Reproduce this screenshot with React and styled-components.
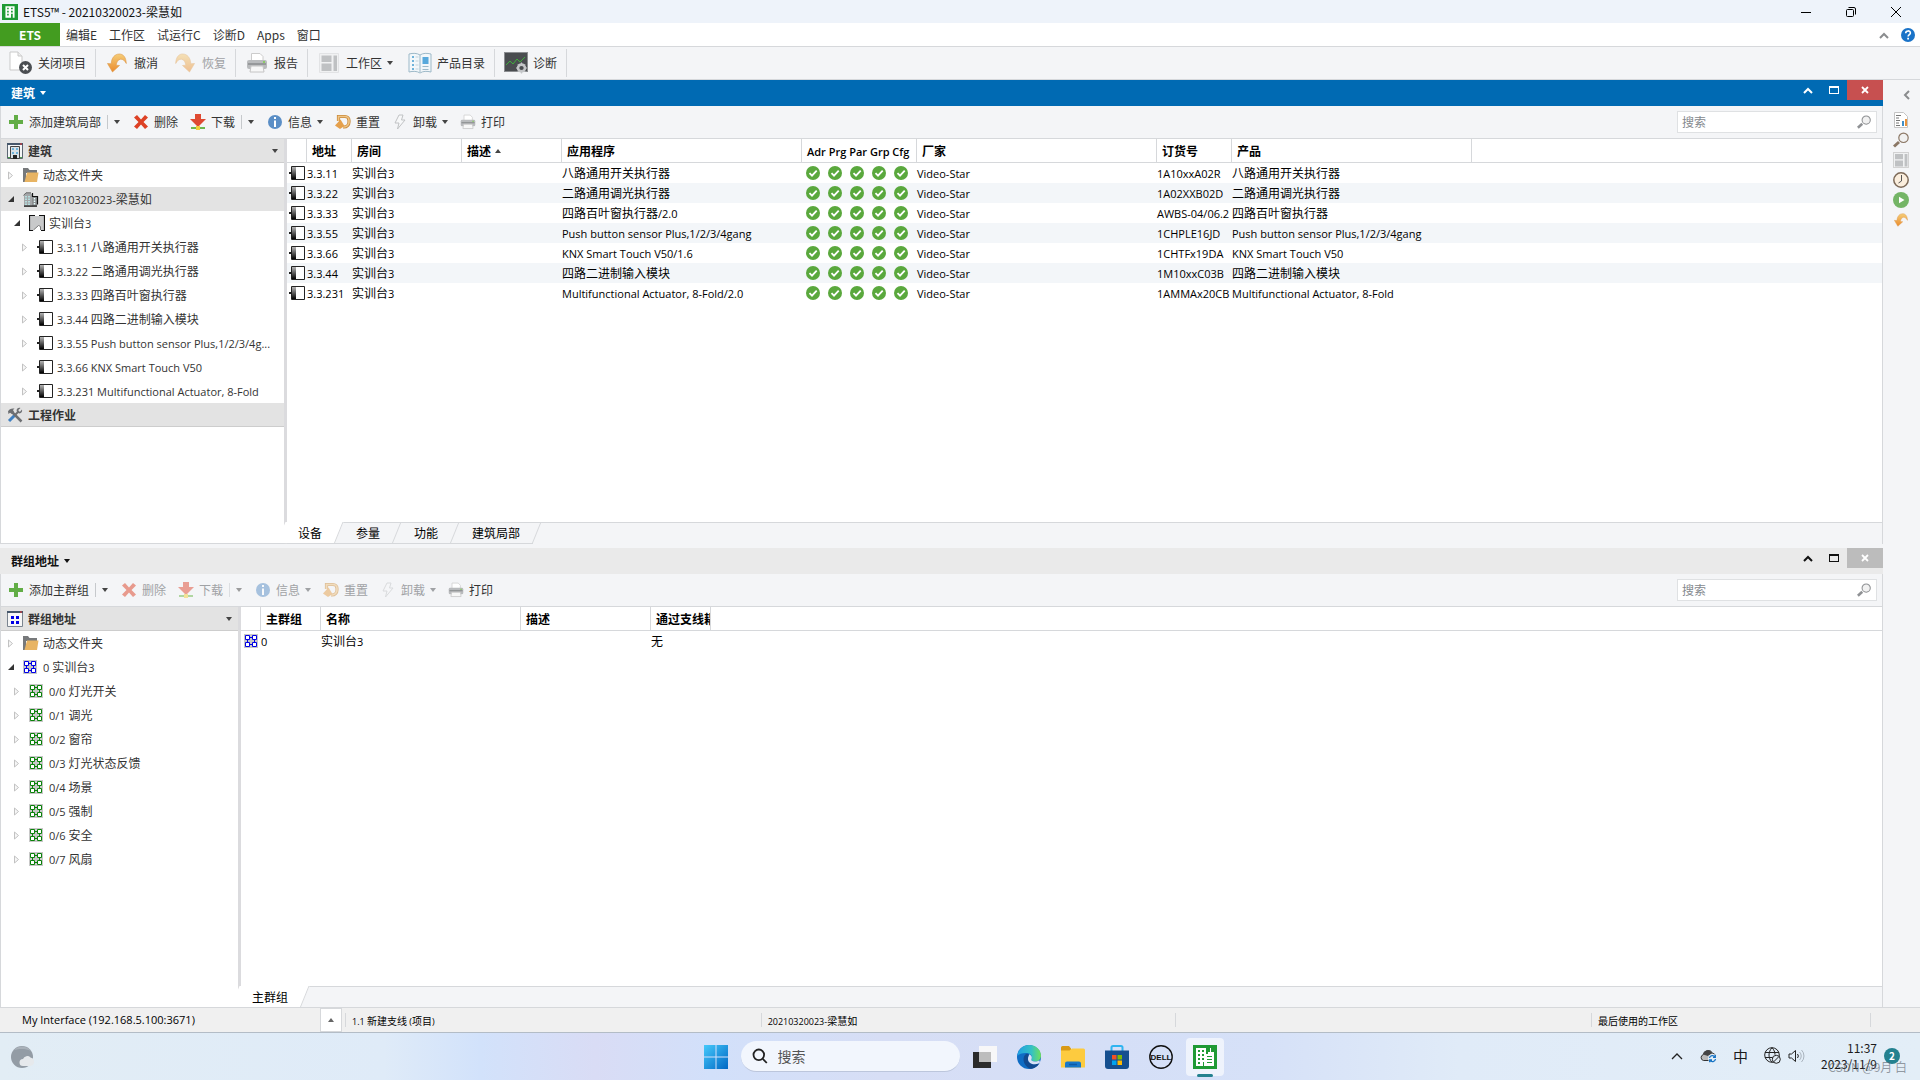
import React from 'react';
import styled, { createGlobalStyle } from 'styled-components';

const GlobalStyle = createGlobalStyle`
  * {
    box-sizing: border-box;
  }
  body {
    margin: 0;
    font-family: 'Noto Sans CJK SC', sans-serif;
    font-size: 12px;
    line-height: 16px;
    color: #333;
    background: #f4f5f7;
  }
  button,
  input {
    font: inherit;
    color: inherit;
    margin: 0;
    padding: 0;
    border: 0;
    background: none;
  }
  svg {
    display: block;
    flex: none;
  }
`;

const line = '#d6d8db';

// ---------- 整体框架 ----------
const Screen = styled.div`
  display: flex;
  flex-direction: column;
  min-height: 100vh;
`;

const TitleBar = styled.header`
  display: flex;
  align-items: center;
  height: 23px;
  padding: 0 2px;
  gap: 5px;
  background: #eef3fa;
  color: #111;
`;

const WindowTitle = styled.h1`
  flex: 1;
  margin: 0;
  font-size: 12px;
  font-weight: 400;
`;

const WindowButtons = styled.div`
  display: flex;
`;

const WindowButton = styled.button`
  display: flex;
  align-items: center;
  justify-content: center;
  width: 45px;
  height: 21px;
`;

const MenuBar = styled.nav`
  display: flex;
  align-items: center;
  height: 24px;
  gap: 12px;
  padding-right: 5px;
  background: #fff;
  border-bottom: 1px solid ${line};
`;

const EtsButton = styled.button`
  width: 60px;
  height: 23px;
  margin-right: -6px;
  background: #439c20;
  color: #fff;
  font-weight: 700;
`;

const MenuItem = styled.button`
  white-space: nowrap;
`;

const MenuSpacer = styled.div`
  flex: 1;
`;

const MainToolbar = styled.div`
  display: flex;
  align-items: center;
  height: 33px;
  background: #f4f5f7;
  border-bottom: 1px solid ${line};
`;

const ToolGroup = styled.div`
  display: flex;
  align-items: center;
  gap: 15px;
  height: 28px;
  padding: 0 9px;
  border-right: 1px solid ${line};
`;

const ToolButton = styled.button`
  display: flex;
  align-items: center;
  gap: 5px;
  white-space: nowrap;
  color: ${(p) => (p.disabled ? '#a0a2a5' : '#333')};
`;

const IconSlot = styled.span`
  display: flex;
  align-items: center;
  justify-content: center;
  width: ${(p) => p.$size || 16}px;
  height: ${(p) => p.$size || 16}px;
  opacity: ${(p) => (p.$faded ? 0.5 : 1)};
`;

const Main = styled.main`
  display: flex;
  flex: 1;
`;

const Panels = styled.div`
  display: flex;
  flex-direction: column;
  flex: 1;
  min-width: 0;
  gap: 4px;
`;

const SideRail = styled.aside`
  display: flex;
  flex-direction: column;
  align-items: center;
  gap: 4px;
  width: 37px;
  padding: 7px 2px 0 0;
`;

const RailButton = styled.button`
  display: flex;
  align-items: center;
  justify-content: center;
  width: 16px;
  height: 16px;
`;

const RailToggle = styled(RailButton)`
  align-self: flex-end;
  margin: 0 4px 5px 0;
`;

// ---------- 面板 ----------
const PanelBox = styled.section`
  display: flex;
  flex-direction: column;
  flex: ${(p) => p.$grow} 1 0;
`;

const PanelHeader = styled.div`
  display: flex;
  height: 26px;
  padding-left: 11px;
  background: ${(p) => (p.$active ? '#006ab3' : '#eaeaea')};
  color: ${(p) => (p.$active ? '#fff' : '#111')};
`;

const PanelTitle = styled.button`
  display: flex;
  align-items: center;
  gap: 5px;
  font-weight: 700;
`;

const PanelControls = styled.div`
  display: flex;
  margin-left: auto;
`;

const PanelControl = styled.button`
  display: flex;
  align-items: center;
  justify-content: center;
  width: 26px;
  height: 20px;
`;

const CloseControl = styled(PanelControl)`
  width: 36px;
  background: ${(p) => (p.$active ? '#c75050' : '#bcbcbc')};
  color: #fff;
`;

const PanelBody = styled.div`
  display: flex;
  flex-direction: column;
  flex: 1;
  border: 1px solid ${line};
  border-width: 0 1px 0 1px;
`;

const PanelToolbar = styled.div`
  display: flex;
  align-items: center;
  gap: 12px;
  height: 33px;
  padding: 0 5px 0 7px;
  border-bottom: 1px solid ${line};
`;

const SplitButton = styled.div`
  display: flex;
  align-items: center;
  gap: 6px;
  margin-right: 1px;
`;

const DropButton = styled.button`
  display: flex;
  align-items: center;
  height: 14px;
  padding-left: 6px;
  border-left: 1px solid #c6c9cc;
  opacity: ${(p) => (p.disabled ? 0.5 : 1)};
`;

const SearchBox = styled.label`
  display: flex;
  align-items: center;
  width: 200px;
  height: 22px;
  margin-left: auto;
  padding: 0 5px 0 4px;
  background: #fff;
  border: 1px solid #dfe1e3;
`;

const SearchInput = styled.input`
  flex: 1;
  min-width: 0;
  outline: 0;
  &::placeholder {
    color: #85898e;
    opacity: 1;
  }
`;

const Split = styled.div`
  display: flex;
  flex: 1;
`;

// ---------- 树 ----------
const Tree = styled.div`
  display: flex;
  flex-direction: column;
  width: ${(p) => p.$width}px;
  background: #fff;
  border-right: 3px solid #dbdbde;
  border-bottom: ${(p) => (p.$closed ? 1 : 0)}px solid ${line};
`;

const TreeHeader = styled.button`
  display: flex;
  align-items: center;
  gap: 5px;
  height: 24px;
  padding: 0 6px;
  background: #e3e3e3;
  border-bottom: 1px solid #cdcdcd;
  font-weight: 700;
`;

const TreeHeaderText = styled.span`
  flex: 1;
  text-align: left;
`;

const TreeList = styled.ul`
  margin: 0;
  padding: 0;
  list-style: none;
`;

const TreeRow = styled.li`
  display: flex;
  align-items: center;
  height: 24px;
  padding-left: ${(p) => [6, 12, 20][p.$level]}px;
  background: ${(p) => (p.$selected ? '#e3e3e3' : '#fff')};
  white-space: nowrap;
  overflow: hidden;
`;

const TreeIcon = styled.span`
  display: flex;
  width: 16px;
  margin: 0 4px 0 8px;
`;

// ---------- 表格 ----------
const Content = styled.div`
  display: flex;
  flex-direction: column;
  flex: 1;
  min-width: 0;
`;

const TableArea = styled.div`
  flex: 1;
  background: #fff;
  border-bottom: 1px solid ${line};
`;

const Table = styled.table`
  width: 100%;
  table-layout: fixed;
  border-collapse: separate;
  border-spacing: 0;
  color: #000;
`;

const Th = styled.th`
  height: 24px;
  padding: 0 0 0 5px;
  border-bottom: 1px solid ${line};
  border-right: ${(p) => (p.$open ? 0 : 1)}px solid ${line};
  font-weight: ${(p) => (p.$light ? 600 : 700)};
  text-align: left;
  white-space: nowrap;
  overflow: hidden;
`;

const ThInner = styled.span`
  display: flex;
  align-items: center;
  gap: 4px;
`;

const Tr = styled.tr`
  background: ${(p) => (p.$striped ? '#f3f6f9' : '#fff')};
`;

const Td = styled.td`
  height: 20px;
  padding: 0;
  white-space: nowrap;
`;

const IconTd = styled(Td)`
  padding-left: ${(p) => p.$indent}px;
`;

const Checks = styled.div`
  display: flex;
  gap: 8px;
  padding-left: 4px;
`;

const Tabs = styled.div`
  display: flex;
  height: ${(p) => (p.$closed ? 21 : 20)}px;
`;

const Tab = styled.button`
  position: relative;
  height: 100%;
  padding: 0 13px 0 21px;
  border-bottom: ${(p) => (p.$closed ? 1 : 0)}px solid ${line};
  color: #000;
  &::after {
    content: '';
    position: absolute;
    top: 0;
    right: 0;
    bottom: 0;
    width: 1px;
    background: ${line};
    transform: skewX(-22deg);
    transform-origin: bottom;
  }
`;

const ActiveTab = styled(Tab)`
  padding-left: 11px;
  z-index: 1;
  &::after {
    top: -1px;
    left: 0;
    width: auto;
    z-index: -1;
    background: #fff;
    border-right: 1px solid ${line};
    box-shadow: -10px 0 0 #fff;
  }
`;

// ---------- 状态栏 / 任务栏 ----------
const StatusBar = styled.footer`
  display: flex;
  align-items: center;
  height: 26px;
  background: #f0f0f0;
  border-top: 1px solid ${line};
  border-bottom: 1px solid #b3bcc6;
  color: #000;
  font-size: 10px;
`;

const Connection = styled.span`
  width: 320px;
  padding-left: 22px;
`;

const ConnectionButton = styled.button`
  display: flex;
  align-items: center;
  justify-content: center;
  width: 22px;
  height: 24px;
  margin-right: 3px;
  background: #fff;
  border: 1px solid ${line};
`;

const StatusCell = styled.span`
  flex: ${(p) => p.$grow} 1 0;
  height: 14px;
  padding-left: 6px;
  border-left: 1px solid ${line};
  line-height: 16px;
  white-space: nowrap;
`;

const StatusEnd = styled(StatusCell)`
  flex: 0 0 50px;
`;

const Taskbar = styled.footer`
  position: relative;
  display: grid;
  grid-template-columns: 1fr auto 1fr;
  align-items: center;
  height: 47px;
  background: linear-gradient(
    90deg,
    #e2edf5 0%,
    #dfebf8 20%,
    #d2e2fb 25%,
    #d9dcf5 31%,
    #d2e0fa 37%,
    #d7def5 46%,
    #d5dff7 58%,
    #d6e1f8 66%,
    #e0ebf8 76%,
    #e3eef7 100%
  );
`;

const Weather = styled.button`
  justify-self: start;
  margin-left: 10px;
`;

const Dock = styled.div`
  display: flex;
  align-items: center;
  gap: 6px;
`;

const DockButton = styled.button`
  display: flex;
  flex-direction: column;
  align-items: center;
  justify-content: center;
  width: 38px;
  height: 38px;
  border-radius: 4px;
  background: ${(p) => (p.$open ? 'rgba(255, 255, 255, 0.6)' : 'transparent')};
`;

const OpenMark = styled.span`
  width: 16px;
  height: 3px;
  margin: 5px 0 -8px;
  border-radius: 2px;
  background: #23818f;
`;

const TaskSearch = styled.label`
  display: flex;
  align-items: center;
  gap: 10px;
  width: 219px;
  height: 31px;
  padding-left: 11px;
  border-radius: 16px;
  background: #f2f6fd;
  border-bottom: 1px solid #bcc6dc;
  font-size: 14px;
  input::placeholder {
    color: #555;
    opacity: 1;
  }
`;

const Tray = styled.div`
  display: flex;
  align-items: center;
  justify-self: end;
  gap: 15px;
  padding: 0 20px 2px 0;
  color: #1b1b1b;
`;

const TrayButton = styled.button`
  display: flex;
  align-items: center;
  justify-content: center;
  width: 17px;
  font-size: 15px;
`;

const VolumeButton = styled(TrayButton)`
  margin-left: -8px;
`;

const Clock = styled.div`
  width: 57px;
  text-align: right;
  white-space: nowrap;
`;

const Badge = styled.span`
  width: 16px;
  height: 16px;
  margin-left: -8px;
  border-radius: 50%;
  background: #23818f;
  color: #fff;
  font-size: 10px;
  font-weight: 700;
  text-align: center;
`;

const Watermark = styled.span`
  position: absolute;
  right: 13px;
  bottom: 5px;
  color: rgba(90, 95, 105, 0.6);
`;

// ---------- 文字 ----------
const Latin = styled.span`
  font-family: 'Open Sans', sans-serif;
  font-size: ${(p) => p.$size}px;
  line-height: 1;
`;

// 西文比中文小一号，两种字形高度才一致
const Label = ({ children, size = 11 }) => (
  <span>
    {children
      .split(/([\x20-\x7e]+)/)
      .filter(Boolean)
      .map((part, i) =>
        /^[\x20-\x7e]/.test(part) ? (
          <Latin key={i} $size={size}>
            {part}
          </Latin>
        ) : (
          part
        )
      )}
  </span>
);

// ---------- 图标 ----------
const Arrow = ({ up, color = '#444' }) => (
  <svg width="6" height="4" viewBox="0 0 6 4">
    <path d={up ? 'M0 4 3 0 6 4z' : 'M0 0h6L3 4z'} fill={color} />
  </svg>
);

const Chevron = ({ color = 'currentColor' }) => (
  <svg width="10" height="8" viewBox="0 0 10 8" fill="none" stroke={color} strokeWidth="2">
    <path d="M1 7 5 3l4 4" />
  </svg>
);

const Expander = ({ open }) => (
  <svg width="8" height="9" viewBox="0 0 8 9">
    {open ? (
      <path d="M7 1v6H1z" fill="#333" />
    ) : (
      <path d="M1.5 1v7l4-3.5z" fill="#f6f6f6" stroke="#c2c2c2" />
    )}
  </svg>
);

const EtsLogo = () => (
  <svg width="16" height="16" viewBox="0 0 14 14">
    <path fill="#1f9a35" d="M0 0h14v14H0z" />
    <path
      fill="#fff"
      fillRule="evenodd"
      d="M3 2h8v10H3zM4.5 3.3v1.4h1.4V3.3zm3.4 0v1.4h1.5V3.3zM4.5 6v1.4h1.4V6zm3.4 0v1.4h1.5V6zM4.5 8.6V10h1.4V8.6zm3.4 0V12h1.5V8.6z"
    />
  </svg>
);

const EtsAppIcon = () => (
  <svg width="24" height="24" viewBox="0 0 24 24">
    <path fill="#1f9a35" d="M0 0h24v24H0z" />
    <path
      fill="#fff"
      fillRule="evenodd"
      d="M3 3h10v6h2V7h2V3h1v4h3v14H3zM5 5v2h2V5zm4 0v2h2V5zM5 9v2h2V9zm4 0v2h2V9zM5 13v2h2v-2zm4 0v2h2v-2zM5 17v2h2v-2zm5 0v4h1v-4zM14 11v1h5v-1zm0 3v1h5v-1zm0 3v1h5v-1z"
    />
  </svg>
);

const UndoIcon = ({ flip, size = 20 }) => (
  <svg width={size} height={size} viewBox="0 0 20 20">
    <defs>
      <linearGradient id="undoFill" x1="0" y1="0" x2="0" y2="1">
        <stop offset="0" stopColor="#f5cd78" />
        <stop offset="1" stopColor="#ea8a2c" />
      </linearGradient>
    </defs>
    <path
      transform={flip ? 'translate(20 0) scale(-1 1)' : undefined}
      fill="url(#undoFill)"
      stroke="#dd9848"
      strokeWidth=".6"
      d="M.5 10.500 5.500 19l7-6.500-3.300-.3c.3-3 1.800-5.700 4.300-6 2.500-.2 4 1.300 5.800 4.300C19 4.500 16.500 1 12.500 1 7.500 1 4.500 5 4.200 10.800z"
    />
  </svg>
);

const CloseProjectIcon = () => (
  <svg width="24" height="24" viewBox="0 0 24 24">
    <path d="M1 1h8l4 4v14H1z" fill="#fff" stroke="#c9c9c9" />
    <path d="M9 1v4h4" fill="#eee" stroke="#c9c9c9" />
    <circle cx="16.500" cy="16.500" r="6.500" fill="#4b4e52" />
    <path d="m14 14 5 5m0-5-5 5" stroke="#fff" strokeWidth="2" />
  </svg>
);

const PrinterIcon = ({ size = 22 }) => (
  <svg width={size} height={size} viewBox="0 0 22 22">
    <path d="M5.500 1.500H14l3 3V9H5.500z" fill="#fff" stroke="#ccc" />
    <rect x="1" y="8" width="20" height="9" rx="2" fill="#b9bbbd" />
    <path d="M2 12h18" stroke="#8b8d8f" strokeWidth="1.500" />
    <path d="M17 10h2" stroke="#7ccf4b" strokeWidth="1.500" />
    <path d="M5 14h12l1 6H4z" fill="#f7f7f7" stroke="#c4c4c4" />
  </svg>
);

const WorkspaceIcon = ({ size = 20, boxed }) => (
  <svg width={size} height={size} viewBox="0 0 20 20">
    <path d="M.5.5h19v19H.5z" fill="#f0f1f2" stroke={boxed ? '#c4c4c4' : '#e2e3e5'} />
    <path d="M2.500 2.500h10V9h-10zM2.500 10.500h10V18h-10zM14.500 2.500H18V18h-3.500z" fill="#bfc1c3" />
  </svg>
);

const CatalogIcon = () => (
  <svg width="24" height="22" viewBox="0 0 24 22">
    <path d="M1 2c4-1 8-1 11 1 3-2 7-2 11-1v18c-4-1-8-1-11 1-3-2-7-2-11-1z" fill="#f2f7fa" stroke="#9db9c8" />
    <path d="M12 3v17" stroke="#9db9c8" />
    <path d="M4 5h2M4 9h2M4 13h2M4 17h2" stroke="#6fb3da" strokeWidth="2" />
    <path d="M7.500 5h3m-3 4h3m-3 4h3m-3 4h3" stroke="#c3d3dc" />
    <path d="M14.500 5h6v7h-6z" fill="#58a9dc" />
    <path d="M14.500 14.500h6m-6 3h6" stroke="#9db9c8" />
  </svg>
);

const DiagnosisIcon = () => (
  <svg width="24" height="22" viewBox="0 0 24 22">
    <rect x=".5" y=".5" width="23" height="19" fill="#4a4d50" stroke="#8b8d90" />
    <path d="m2 13 4-4 3 3 4-5 3 3 5-5" fill="none" stroke="#3fae3c" />
    <circle cx="17.500" cy="16" r="3.500" fill="none" stroke="#c4c6c8" strokeWidth="2.500" />
    <path d="M17.500 10.500v11M12 16h11M13.800 12.300l7.400 7.400m0-7.400-7.400 7.400" stroke="#c4c6c8" strokeWidth="1.200" />
    <circle cx="17.500" cy="16" r="2" fill="#4a4d50" />
  </svg>
);

const PlusIcon = () => (
  <svg width="14" height="14" viewBox="0 0 14 14">
    <path d="M5 0h4v5h5v4H9v5H5V9H0V5h5z" fill="#62ad46" />
  </svg>
);

const DeleteIcon = () => (
  <svg width="14" height="14" viewBox="0 0 14 14">
    <path d="M3 0 7 4.500 11 0l3 2.500L9.500 7l4.500 4.500L11 14 7 9.500 3 14 0 11.500 4.500 7 0 2.500z" fill="#dd4125" />
  </svg>
);

const DownloadIcon = () => (
  <svg width="16" height="16" viewBox="0 0 16 16">
    <path d="M5 0h6v5h5l-8 8-8-8h5z" fill="#df4a32" />
    <path d="M1 13h14v2H1z" fill="#6eb84e" />
    <path d="M6 12h4v4H6z" fill="#f1cf3b" />
  </svg>
);

const InfoIcon = () => (
  <svg width="14" height="14" viewBox="0 0 14 14">
    <circle cx="7" cy="7" r="7" fill="#5a8ec6" />
    <path d="M6 2h2v2H6zM6 5.500h2V12H6z" fill="#fff" />
  </svg>
);

const ResetIcon = () => (
  <svg width="16" height="16" viewBox="0 0 16 16">
    <path d="M3.500 7V2.500h6.500a4 4 0 0 1 4 4V8a5 5 0 0 1-5 5H8" fill="none" stroke="#c98a3d" strokeWidth="3.200" />
    <path d="M3.500 7V2.500h6.500a4 4 0 0 1 4 4V8a5 5 0 0 1-5 5H8" fill="none" stroke="#f0c585" strokeWidth="1.600" />
    <path d="M0 11.500 5.500 5.500l4 6.500-4.500 3z" fill="#e5a04c" />
  </svg>
);

const BoltIcon = () => (
  <svg width="12" height="16" viewBox="0 0 12 16">
    <path d="M5 1h4L7.500 6h3.500L3.500 15 5 9H1z" fill="#f7f8f9" stroke="#c0c2c4" />
  </svg>
);

const MagnifierIcon = ({ size = 14, handle = '#8f9194' }) => (
  <svg width={size} height={size} viewBox="0 0 16 16">
    <path d="m1 14.500 5-4.500" stroke={handle} strokeWidth="3" />
    <circle cx="10.500" cy="5.800" r="4.700" fill="#f1f1f1" stroke={handle} strokeWidth="1.200" />
  </svg>
);

const BuildingWindowIcon = () => (
  <svg width="16" height="16" viewBox="0 0 16 16">
    <path d="M.5.5h15v15H.5z" fill="#f4f6f7" stroke="#5b6672" />
    <path d="M0 0h16v2H0z" fill="#46576b" />
    <path d="M13 1h2" stroke="#e33" />
    <path d="M3.500 3.500h9v12h-9z" fill="#d9e1e6" stroke="#444" />
    <path d="M5 5h2v2H5zm4 0h2v2H9zM5 9h2v2H5zm4 0h2v2H9z" fill="#6fb3da" />
    <path d="M6 12h4v4H6z" fill="#222" />
    <path d="M1 14h2v1H1zm12 0h2v1h-2z" fill="#4da14a" />
  </svg>
);

const GroupWindowIcon = () => (
  <svg width="16" height="16" viewBox="0 0 16 16">
    <path d="M.5.5h15v15H.5z" fill="#f7f7f7" stroke="#7b8590" />
    <path d="M0 0h16v2H0z" fill="#46576b" />
    <path d="M13 1h2" stroke="#e33" />
    <path d="M4 5h3v3H4zm5 0h3v3H9zm-5 5h3v3H4zm5 0h3v3H9z" fill="#0000e6" />
  </svg>
);

const ToolsIcon = () => (
  <svg width="16" height="16" viewBox="0 0 16 16">
    <path d="m2 14 6-6" stroke="#3f7fc0" strokeWidth="3" />
    <path d="m8 8 4-4" stroke="#6d6f72" strokeWidth="2" />
    <path d="M15 2.500 12.800 5l-1.500-.2-.2-1.600L13.500 1C11 .3 9.200 2 9.700 4.300l1.900 2c2.300.6 4.100-1.200 3.400-3.800z" fill="#6d6f72" />
    <path d="m5 5 9.500 9.500" stroke="#6d6f72" strokeWidth="2.500" />
    <path d="M1 4.500C2 2 4.500 1 7.500 1.500L6 3l1 2-2 2-2-1.300L1.500 7z" fill="#6d6f72" />
  </svg>
);

const FolderIcon = () => (
  <svg width="16" height="14" viewBox="0 0 16 14">
    <path d="M0 0h5l1.500 2H14v3H3v9H0z" fill="#77797b" />
    <path d="M4 4.500h11.500L14 14H1.500z" fill="#e8b463" />
  </svg>
);

const ProjectIcon = () => (
  <svg width="16" height="15" viewBox="0 0 16 15">
    <path d="M1 3h1V1h6v1h1v12H1z" fill="#a4a6a8" />
    <path d="M9 5h5v9H9z" fill="#8d8f91" />
    <path d="M9.500 1v4M9 4.500h5.500v8M1 14.200h13" stroke="#111" fill="none" strokeWidth="1.200" />
    <path d="M.5 3.500 3 .8h5" stroke="#666" fill="none" />
    <path d="M3 4v9M6 4v9" stroke="#b9f0f0" strokeWidth="1.500" strokeDasharray="1.500 1" />
    <path d="M11.500 6v7" stroke="#e8ffff" strokeWidth="1.500" strokeDasharray="1.500 1" />
  </svg>
);

const RoomIcon = () => (
  <svg width="16" height="16" viewBox="0 0 16 16">
    <path d="M1 1h14v14h-3v-3.500L9.500 10.500 4.500 15H1z" fill="#c8c9ca" />
    <path d="M6 .5H.5v15H4M10 .5h5.500v15H12" fill="none" stroke="#111" strokeWidth="1.200" />
    <path d="m4.500 15 5-4.500 2 1v3.500" fill="none" stroke="#777" />
  </svg>
);

const DeviceIcon = () => (
  <svg width="16" height="14" viewBox="0 0 16 14">
    <defs>
      <linearGradient id="deviceFill" x1="0" y1="0" x2="0" y2="1">
        <stop offset="0" stopColor="#b5b5b5" />
        <stop offset="1" stopColor="#000" />
      </linearGradient>
    </defs>
    <path d="M0 6h2v2H0z" fill="#222" />
    <path d="M2.500.5h13v13h-13z" fill="#fff" stroke="#222" />
    <path d="M3 1h4v12H3z" fill="url(#deviceFill)" />
  </svg>
);

const GroupIcon = ({ color }) => (
  <svg width="14" height="14" viewBox="0 0 14 14">
    <path d="M0 0h14v14H0z" fill="#c8c8c8" />
    <path d="M3.500 5.500v3m7-3v3M5.500 3.500h3m-3 7h3" stroke={color} />
    <path d="M1.500 1.500h4v4h-4zM8.500 1.500h4v4h-4zM1.500 8.500h4v4h-4zM8.500 8.500h4v4h-4z" fill="#fff" stroke={color} />
  </svg>
);

const CheckIcon = () => (
  <svg width="14" height="14" viewBox="0 0 14 14">
    <circle cx="7" cy="7" r="7" fill="#5aa83d" />
    <path d="m3.500 7.200 2.500 2.500 4.700-5" fill="none" stroke="#fff" strokeWidth="1.800" />
  </svg>
);

const ReportIcon = () => (
  <svg width="16" height="16" viewBox="0 0 16 16">
    <path d="M1.500.5h9l4 4v11h-13z" fill="#fff" stroke="#c4c4c4" />
    <path d="M3 3.500h5M3 6h3M3 8.500h4M3 11h3M3 13.500h4" stroke="#777" />
    <path d="M9 9h2v5H9z" fill="#3f8fc8" />
    <path d="M12 7h2v7h-2z" fill="#e8923a" />
  </svg>
);

const ClockIcon = () => (
  <svg width="16" height="16" viewBox="0 0 16 16">
    <circle cx="8" cy="8" r="7.200" fill="#fbeedd" stroke="#7d6a58" strokeWidth="1.500" />
    <path d="M8.500 3v6L5.500 11" fill="none" stroke="#555" />
  </svg>
);

const PlayIcon = () => (
  <svg width="16" height="16" viewBox="0 0 16 16">
    <circle cx="8" cy="8" r="8" fill="#74b566" />
    <path d="M6 4.800 11.500 8 6 11.200z" fill="#fff" />
  </svg>
);

const HelpIcon = () => (
  <svg width="14" height="14" viewBox="0 0 14 14">
    <circle cx="7" cy="7" r="7" fill="#1a73c8" />
    <path d="M4.700 5.200c0-3 4.700-3 4.700-.2 0 1.700-2.200 1.700-2.300 3.500" fill="none" stroke="#fff" strokeWidth="1.600" />
    <path d="M6.200 9.800h1.800v1.700H6.200z" fill="#fff" />
  </svg>
);

const WindowsIcon = () => (
  <svg width="24" height="24" viewBox="0 0 24 24">
    <defs>
      <linearGradient id="winFill" x1="0" y1="0" x2="1" y2="1">
        <stop offset="0" stopColor="#45c9fb" />
        <stop offset="1" stopColor="#0067c4" />
      </linearGradient>
    </defs>
    <path d="M0 0h11.500v11.500H0zM12.500 0H24v11.500H12.500zM0 12.500h11.500V24H0zM12.500 12.500H24V24H12.500z" fill="url(#winFill)" />
  </svg>
);

const TaskViewIcon = () => (
  <svg width="24" height="24" viewBox="0 0 24 24">
    <path d="M0 7h18v16H0z" fill="#2b2b2b" />
    <path d="M6 1h18v16H6z" fill="#f7f7f8" />
    <path d="M6 7h12v10H6z" fill="#bdbdbd" />
  </svg>
);

const EdgeIcon = () => (
  <svg width="24" height="24" viewBox="0 0 24 24">
    <defs>
      <linearGradient id="edgeTop" x1="0" y1="0" x2="1" y2="0">
        <stop offset="0" stopColor="#1f9fe3" />
        <stop offset=".6" stopColor="#35c1c4" />
        <stop offset="1" stopColor="#6fe05a" />
      </linearGradient>
    </defs>
    <circle cx="12" cy="12" r="12" fill="#0f6cc4" />
    <path d="M.3 11C1 4.500 6 0 12 0c7 0 12 5 12 10.500 0 4-3 6-6 6-2.800 0-4-1.200-3.500-2.300C16 11.500 14 8.500 10 8c-4-.4-8 1-9.700 3z" fill="url(#edgeTop)" />
    <path d="M9 9c-4 3-3.500 11 4 14.800 4 .2 8-2.300 9.500-6-5 3-11 1.200-11.500-3.300C10.800 12 12 11 12 10c0-.8-1.500-1.600-3-1z" fill="#124a8f" />
    <path d="M14.500 14.200C15.600 12 14 9.500 12 9.500c.3 1-1.300 2.400-1 5 .4 3 3.500 5 7 4.800 2.300-.1 3.800-.8 5-1.800l-.6-2.200c-1.200.8-2.800 1.200-4.600 1.200-2.800 0-3.900-1.300-3.300-2.300z" fill="#d8e2f6" />
  </svg>
);

const ExplorerIcon = () => (
  <svg width="24" height="24" viewBox="0 0 24 24">
    <path d="M0 2.500A1.500 1.500 0 0 1 1.500 1H8l2 2.500V6H0z" fill="#d99a16" />
    <path d="M0 5.500h8.500L11 3.500h11.500A1.500 1.500 0 0 1 24 5v17.500H0z" fill="#fdcb3f" />
    <path d="M4 22.500v-4a2 2 0 0 1 2-2h12a2 2 0 0 1 2 2v4z" fill="#1878c9" />
    <path d="M8 19.500h8" stroke="#0f5aa5" strokeWidth="1.500" />
  </svg>
);

const StoreIcon = () => (
  <svg width="24" height="24" viewBox="0 0 24 24">
    <path d="M6.500 7V2.500a1.500 1.500 0 0 1 1.500-1.500h8a1.500 1.500 0 0 1 1.500 1.500V7" fill="none" stroke="#2fb4f0" strokeWidth="2" />
    <path d="M0 5.500h24V21a3 3 0 0 1-3 3H3a3 3 0 0 1-3-3z" fill="#154f8f" />
    <path d="M7 10h4.500v4.500H7z" fill="#f25022" />
    <path d="M12.500 10H17v4.500h-4.500z" fill="#7fba00" />
    <path d="M7 15.500h4.500V20H7z" fill="#00a4ef" />
    <path d="M12.500 15.500H17V20h-4.500z" fill="#ffb900" />
  </svg>
);

const DellIcon = () => (
  <svg width="24" height="24" viewBox="0 0 24 24">
    <circle cx="12" cy="12" r="11.200" fill="none" stroke="#111" strokeWidth="1.400" />
    <text x="12" y="15" textAnchor="middle" fontFamily="Liberation Sans" fontWeight="700" fontSize="8" fill="#111">
      DELL
    </text>
  </svg>
);

const SearchGlass = () => (
  <svg width="16" height="16" viewBox="0 0 16 16" fill="none" stroke="#222" strokeWidth="1.800">
    <circle cx="6.800" cy="6.800" r="5.300" />
    <path d="m10.800 10.800 4 4.200" />
  </svg>
);

const WeatherIcon = () => (
  <svg width="24" height="24" viewBox="0 0 24 24">
    <circle cx="12" cy="12" r="11" fill="#939ca5" />
    <path d="M4 5a11 11 0 0 1 17 1c-6-3-12-2-17-1z" fill="#a9b1b9" />
    <path d="M13 21a3.500 3.500 0 0 1 0-7 4.500 4.500 0 0 1 7.500-1.500 4.300 4.300 0 0 1 0 8.500z" fill="#e6e9ec" />
  </svg>
);

const CloudSyncIcon = () => (
  <svg width="17" height="14" viewBox="0 0 17 14">
    <path d="M3.500 11.500a3 3 0 0 1-.3-5.800A5 5 0 0 1 12.500 4 4 4 0 0 1 15.500 8v3.500z" fill="#b9b9b9" stroke="#333" />
    <path d="M3.200 5.500A5 5 0 0 1 12.500 4L8 7z" fill="#444" />
    <circle cx="12.500" cy="9.500" r="4.500" fill="#e2edf7" />
    <path d="M9.500 9a3 3 0 0 1 5.500-1M15.500 10a3 3 0 0 1-5.500 1.200M15.300 6v2.300H13M9.700 13.200V11H12" fill="none" stroke="#1673c4" strokeWidth="1.300" />
  </svg>
);

const OfflineIcon = () => (
  <svg width="17" height="17" viewBox="0 0 17 17" fill="none" stroke="#222">
    <circle cx="8" cy="8" r="7.300" />
    <path d="M1 5.500h14M1 10.500h8M8 .7C4 5 4 11 8 15.300M8 .7c2 2 3 4.500 3 7" />
    <circle cx="12.300" cy="12.300" r="4" fill="#e2edf7" />
    <path d="m9.500 15 5.600-5.600" />
  </svg>
);

const SpeakerIcon = () => (
  <svg width="17" height="14" viewBox="0 0 17 14" fill="none" stroke="#222">
    <path d="M1 5h2.500L7.500 1.500v11L3.500 9H1z" />
    <path d="M9.500 5a3 3 0 0 1 0 4" />
    <path d="M11.500 3a5.500 5.500 0 0 1 0 8M13.500 1a8.500 8.500 0 0 1 0 12" stroke="#a9b3bd" />
  </svg>
);

// ---------- 数据 ----------
const devices = [
  ['3.3.11', '八路通用开关执行器', '1A10xxA02R', '八路通用开关执行器'],
  ['3.3.22', '二路通用调光执行器', '1A02XXB02D', '二路通用调光执行器'],
  ['3.3.33', '四路百叶窗执行器/2.0', 'AWBS-04/06.2', '四路百叶窗执行器'],
  ['3.3.55', 'Push button sensor Plus,1/2/3/4gang', '1CHPLE16JD', 'Push button sensor Plus,1/2/3/4gang'],
  ['3.3.66', 'KNX Smart Touch V50/1.6', '1CHTFx19DA', 'KNX Smart Touch V50'],
  ['3.3.44', '四路二进制输入模块', '1M10xxC03B', '四路二进制输入模块'],
  ['3.3.231', 'Multifunctional Actuator, 8-Fold/2.0', '1AMMAx20CB', 'Multifunctional Actuator, 8-Fold'],
];

const buildingTree = [
  { level: 0, icon: <FolderIcon />, text: '动态文件夹' },
  { level: 0, icon: <ProjectIcon />, text: '20210320023-梁慧如', open: true, selected: true },
  { level: 1, icon: <RoomIcon />, text: '实训台3', open: true },
  ...[
    '3.3.11 八路通用开关执行器',
    '3.3.22 二路通用调光执行器',
    '3.3.33 四路百叶窗执行器',
    '3.3.44 四路二进制输入模块',
    '3.3.55 Push button sensor Plus,1/2/3/4g...',
    '3.3.66 KNX Smart Touch V50',
    '3.3.231 Multifunctional Actuator, 8-Fold',
  ].map((text) => ({ level: 2, icon: <DeviceIcon />, text })),
];

const groupTree = [
  { level: 0, icon: <FolderIcon />, text: '动态文件夹' },
  { level: 0, icon: <GroupIcon color="#0000e6" />, text: '0 实训台3', open: true },
  ...['灯光开关', '调光', '窗帘', '灯光状态反馈', '场景', '强制', '安全', '风扇'].map((name, i) => ({
    level: 1,
    icon: <GroupIcon color="#0a820a" />,
    text: `0/${i} ${name}`,
  })),
];

// ---------- 组件 ----------
const Action = ({ icon, text, disabled, drop }) => (
  <ToolButton disabled={disabled}>
    <IconSlot $faded={disabled}>{icon}</IconSlot>
    {text}
    {drop && <Arrow color={disabled ? '#a0a2a5' : '#444'} />}
  </ToolButton>
);

const SplitAction = ({ disabled, ...rest }) => (
  <SplitButton>
    <Action disabled={disabled} {...rest} />
    <DropButton disabled={disabled} aria-label="更多">
      <Arrow />
    </DropButton>
  </SplitButton>
);

const TreeItems = ({ items }) => (
  <TreeList>
    {items.map((item) => (
      <TreeRow key={item.text} $level={item.level} $selected={item.selected}>
        <Expander open={item.open} />
        <TreeIcon>{item.icon}</TreeIcon>
        <Label>{item.text}</Label>
      </TreeRow>
    ))}
  </TreeList>
);

const Panel = ({ title, active, grow, addText, disabled, children }) => (
  <PanelBox $grow={grow}>
    <PanelHeader $active={active}>
      <PanelTitle>
        {title}
        <Arrow color="currentColor" />
      </PanelTitle>
      <PanelControls>
        <PanelControl aria-label="折叠">
          <Chevron />
        </PanelControl>
        <PanelControl aria-label="最大化">
          <svg width="10" height="8" viewBox="0 0 10 8">
            <path d="M0 0h10v8H0zM1 2v5h8V2z" fill="currentColor" fillRule="evenodd" />
          </svg>
        </PanelControl>
        <CloseControl $active={active} aria-label="关闭">
          <svg width="8" height="8" viewBox="0 0 8 8">
            <path d="m1 1 6 6m0-6L1 7" stroke="currentColor" strokeWidth="1.800" />
          </svg>
        </CloseControl>
      </PanelControls>
    </PanelHeader>
    <PanelBody>
      <PanelToolbar>
        <SplitAction icon={<PlusIcon />} text={addText} />
        <Action icon={<DeleteIcon />} text="删除" disabled={disabled} />
        <SplitAction icon={<DownloadIcon />} text="下载" disabled={disabled} />
        <Action icon={<InfoIcon />} text="信息" disabled={disabled} drop />
        <Action icon={<ResetIcon />} text="重置" disabled={disabled} />
        <Action icon={<BoltIcon />} text="卸载" disabled={disabled} drop />
        <Action icon={<PrinterIcon size={16} />} text="打印" />
        <SearchBox>
          <SearchInput type="text" placeholder="搜索" aria-label={`搜索${title}`} />
          <MagnifierIcon />
        </SearchBox>
      </PanelToolbar>
      <Split>{children}</Split>
    </PanelBody>
  </PanelBox>
);

const DeviceTable = () => (
  <Table>
    <colgroup>
      {[20, 45, 110, 100, 240, 115, 240, 75, 240].map((w, i) => (
        <col key={i} width={w} />
      ))}
      <col />
    </colgroup>
    <thead>
      <tr>
        <Th />
        <Th>地址</Th>
        <Th>房间</Th>
        <Th>
          <ThInner>
            描述
            <Arrow up />
          </ThInner>
        </Th>
        <Th>应用程序</Th>
        <Th $light>
          <Label>Adr Prg Par Grp Cfg</Label>
        </Th>
        <Th>厂家</Th>
        <Th>订货号</Th>
        <Th>产品</Th>
        <Th />
      </tr>
    </thead>
    <tbody>
      {devices.map(([address, program, order, product], i) => (
        <Tr key={address} $striped={i % 2 === 1}>
          <IconTd $indent={2}>
            <DeviceIcon />
          </IconTd>
          <Td>
            <Label>{address}</Label>
          </Td>
          <Td>
            <Label>实训台3</Label>
          </Td>
          <Td />
          <Td>
            <Label>{program}</Label>
          </Td>
          <Td>
            <Checks>
              {['Adr', 'Prg', 'Par', 'Grp', 'Cfg'].map((flag) => (
                <CheckIcon key={flag} />
              ))}
            </Checks>
          </Td>
          <Td>
            <Label>Video-Star</Label>
          </Td>
          <Td>
            <Label>{order}</Label>
          </Td>
          <Td>
            <Label>{product}</Label>
          </Td>
          <Td />
        </Tr>
      ))}
    </tbody>
  </Table>
);

const GroupTable = () => (
  <Table>
    <colgroup>
      {[20, 60, 200, 130, 60].map((w, i) => (
        <col key={i} width={w} />
      ))}
      <col />
    </colgroup>
    <thead>
      <tr>
        <Th />
        <Th>主群组</Th>
        <Th>名称</Th>
        <Th>描述</Th>
        <Th>通过支线耦</Th>
        <Th $open />
      </tr>
    </thead>
    <tbody>
      <Tr>
        <IconTd $indent={3}>
          <GroupIcon color="#0000e6" />
        </IconTd>
        <Td>
          <Label>0</Label>
        </Td>
        <Td>
          <Label>实训台3</Label>
        </Td>
        <Td />
        <Td>无</Td>
        <Td />
      </Tr>
    </tbody>
  </Table>
);

const App = () => (
  <Screen>
    <GlobalStyle />
    <TitleBar>
      <EtsLogo />
      <WindowTitle>ETS5™ - 20210320023-梁慧如</WindowTitle>
      <WindowButtons>
        <WindowButton aria-label="最小化">
          <svg width="10" height="10" viewBox="0 0 10 10">
            <path d="M0 5.500h10" stroke="#000" />
          </svg>
        </WindowButton>
        <WindowButton aria-label="还原">
          <svg width="10" height="10" viewBox="0 0 10 10" fill="none" stroke="#000">
            <rect x=".5" y="2.500" width="7" height="7" rx="1" />
            <path d="M2.500.5H8A1.500 1.500 0 0 1 9.500 2v5.500" />
          </svg>
        </WindowButton>
        <WindowButton aria-label="关闭窗口">
          <svg width="10" height="10" viewBox="0 0 10 10">
            <path d="m0 0 10 10M10 0 0 10" stroke="#000" />
          </svg>
        </WindowButton>
      </WindowButtons>
    </TitleBar>

    <MenuBar>
      <EtsButton>ETS</EtsButton>
      {['编辑E', '工作区', '试运行C', '诊断D', 'Apps', '窗口'].map((item) => (
        <MenuItem key={item}>{item}</MenuItem>
      ))}
      <MenuSpacer />
      <MenuItem aria-label="折叠功能区">
        <Chevron color="#8a8c8e" />
      </MenuItem>
      <MenuItem aria-label="帮助">
        <HelpIcon />
      </MenuItem>
    </MenuBar>

    <MainToolbar>
      <ToolGroup>
        <ToolButton>
          <IconSlot $size={24}>
            <CloseProjectIcon />
          </IconSlot>
          关闭项目
        </ToolButton>
      </ToolGroup>
      <ToolGroup>
        <ToolButton>
          <IconSlot $size={24}>
            <UndoIcon />
          </IconSlot>
          撤消
        </ToolButton>
        <ToolButton disabled>
          <IconSlot $size={24} $faded>
            <UndoIcon flip />
          </IconSlot>
          恢复
        </ToolButton>
      </ToolGroup>
      <ToolGroup>
        <ToolButton>
          <IconSlot $size={24}>
            <PrinterIcon />
          </IconSlot>
          报告
        </ToolButton>
      </ToolGroup>
      <ToolGroup>
        <ToolButton>
          <IconSlot $size={24}>
            <WorkspaceIcon />
          </IconSlot>
          工作区
          <Arrow />
        </ToolButton>
        <ToolButton>
          <IconSlot $size={24}>
            <CatalogIcon />
          </IconSlot>
          产品目录
        </ToolButton>
      </ToolGroup>
      <ToolGroup>
        <ToolButton>
          <IconSlot $size={24}>
            <DiagnosisIcon />
          </IconSlot>
          诊断
        </ToolButton>
      </ToolGroup>
    </MainToolbar>

    <Main>
      <Panels>
        <Panel title="建筑" active grow={464} addText="添加建筑局部">
          <Tree $width={286} $closed>
            <TreeHeader>
              <BuildingWindowIcon />
              <TreeHeaderText>建筑</TreeHeaderText>
              <Arrow />
            </TreeHeader>
            <TreeItems items={buildingTree} />
            <TreeHeader>
              <ToolsIcon />
              <TreeHeaderText>工程作业</TreeHeaderText>
            </TreeHeader>
          </Tree>
          <Content>
            <TableArea>
              <DeviceTable />
            </TableArea>
            <Tabs $closed>
              <ActiveTab $closed>设备</ActiveTab>
              <Tab $closed>参量</Tab>
              <Tab $closed>功能</Tab>
              <Tab $closed>建筑局部</Tab>
            </Tabs>
          </Content>
        </Panel>

        <Panel title="群组地址" grow={459} addText="添加主群组" disabled>
          <Tree $width={240}>
            <TreeHeader>
              <GroupWindowIcon />
              <TreeHeaderText>群组地址</TreeHeaderText>
              <Arrow />
            </TreeHeader>
            <TreeItems items={groupTree} />
          </Tree>
          <Content>
            <TableArea>
              <GroupTable />
            </TableArea>
            <Tabs>
              <ActiveTab>主群组</ActiveTab>
            </Tabs>
          </Content>
        </Panel>
      </Panels>

      <SideRail>
        <RailToggle aria-label="展开侧栏">
          <svg width="7" height="10" viewBox="0 0 7 10" fill="none" stroke="#8a8c8e" strokeWidth="2">
            <path d="M6 1 2 5l4 4" />
          </svg>
        </RailToggle>
        <RailButton aria-label="报告">
          <ReportIcon />
        </RailButton>
        <RailButton aria-label="查找">
          <MagnifierIcon size={16} handle="#8b7765" />
        </RailButton>
        <RailButton aria-label="工作区">
          <WorkspaceIcon size={16} boxed />
        </RailButton>
        <RailButton aria-label="历史">
          <ClockIcon />
        </RailButton>
        <RailButton aria-label="运行">
          <PlayIcon />
        </RailButton>
        <RailButton aria-label="撤消">
          <UndoIcon size={14} />
        </RailButton>
      </SideRail>
    </Main>

    <StatusBar>
      <Connection>
        <Label>My Interface (192.168.5.100:3671)</Label>
      </Connection>
      <ConnectionButton aria-label="选择接口">
        <Arrow up color="#666" />
      </ConnectionButton>
      <StatusCell $grow={416}>
        <Label size={9}>1.1 新建支线 (项目)</Label>
      </StatusCell>
      <StatusCell $grow={415}>
        <Label size={9}>20210320023-梁慧如</Label>
      </StatusCell>
      <StatusCell $grow={416} />
      <StatusCell $grow={277}>最后使用的工作区</StatusCell>
      <StatusEnd />
    </StatusBar>

    <Taskbar>
      <Weather aria-label="天气">
        <WeatherIcon />
      </Weather>
      <Dock>
        <DockButton aria-label="开始">
          <WindowsIcon />
        </DockButton>
        <TaskSearch>
          <SearchGlass />
          <SearchInput type="text" placeholder="搜索" aria-label="搜索" />
        </TaskSearch>
        <DockButton aria-label="任务视图">
          <TaskViewIcon />
        </DockButton>
        <DockButton aria-label="Edge">
          <EdgeIcon />
        </DockButton>
        <DockButton aria-label="文件资源管理器">
          <ExplorerIcon />
        </DockButton>
        <DockButton aria-label="应用商店">
          <StoreIcon />
        </DockButton>
        <DockButton aria-label="Dell">
          <DellIcon />
        </DockButton>
        <DockButton aria-label="ETS5" $open>
          <EtsAppIcon />
          <OpenMark />
        </DockButton>
      </Dock>
      <Tray>
        <TrayButton aria-label="显示隐藏的图标">
          <svg width="12" height="8" viewBox="0 0 12 8" fill="none" stroke="#222" strokeWidth="1.300">
            <path d="m1 7 5-5 5 5" />
          </svg>
        </TrayButton>
        <TrayButton aria-label="OneDrive">
          <CloudSyncIcon />
        </TrayButton>
        <TrayButton>中</TrayButton>
        <TrayButton aria-label="网络">
          <OfflineIcon />
        </TrayButton>
        <VolumeButton aria-label="音量">
          <SpeakerIcon />
        </VolumeButton>
        <Clock>
          11:37
          <br />
          2023/11/9
        </Clock>
        <Badge>2</Badge>
      </Tray>
      <Watermark>CSDN @9月 白</Watermark>
    </Taskbar>
  </Screen>
);

export default App;
